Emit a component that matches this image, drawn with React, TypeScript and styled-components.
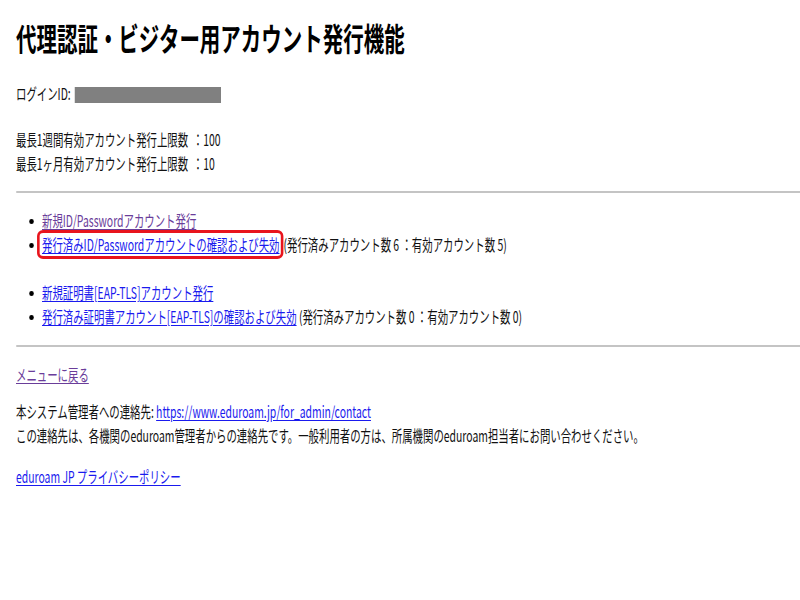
import React from 'react';
import styled, { createGlobalStyle } from 'styled-components';

// the screenshot is squeezed sideways, so the page is drawn wide and scaled back
const SQUEEZE = 0.65;

const GlobalStyle = createGlobalStyle`
  html, body {
    margin: 0;
    padding: 0;
    background: #fff;
    overflow: hidden;
  }
  body {
    font-family: "Noto Sans CJK JP", "DejaVu Sans", sans-serif;
    font-size: 16px;
    color: #111;
  }
`;

const Page = styled.div`
  width: calc(800px / ${SQUEEZE});
  transform: scaleX(${SQUEEZE});
  transform-origin: 0 0;
  padding: 17px 0 0 ${16 / SQUEEZE}px;
  box-sizing: border-box;
  line-height: 24px;
`;

const Title = styled.h1`
  margin: 0;
  font-size: 31.5px;
  line-height: 40px;
  font-weight: bold;
  color: #000;
`;

const Para = styled.p<{ $top?: number }>`
  margin: ${({ $top }) => $top ?? 16}px 0 0;
`;

const Masked = styled.span`
  display: inline-block;
  width: ${146 / SQUEEZE}px;
  height: 16px;
  margin-left: ${4 / SQUEEZE}px;
  vertical-align: -3px;
  background: #808080;
`;

const Rule = styled.hr<{ $top: number }>`
  margin: ${({ $top }) => $top}px 0 0;
  border: none;
  border-top: 2px solid #c4c4c4;
  height: 0;
`;

const List = styled.ul<{ $top: number }>`
  margin: ${({ $top }) => $top}px 0 0;
  padding-left: 40px;
  list-style: none;
`;

const Item = styled.li`
  position: relative;
  line-height: 23.5px;

  &::before {
    content: '';
    position: absolute;
    left: ${-13 / SQUEEZE}px;
    top: 10px;
    width: ${5 / SQUEEZE}px;
    height: 5px;
    border-radius: 50%;
    background: #000;
  }
`;

const Link = styled.a<{ $visited?: boolean }>`
  color: ${({ $visited }) => ($visited ? '#6a3d9a' : '#1a1aee')};
  text-decoration: underline;
  text-underline-offset: 2px;
  cursor: pointer;
`;

const Marked = styled.span`
  position: relative;
  margin-right: ${4 / SQUEEZE}px;

  &::after {
    content: '';
    position: absolute;
    left: ${-5 / SQUEEZE}px;
    right: ${-4 / SQUEEZE}px;
    top: -2px;
    bottom: -3px;
    border: 3px solid #e8141c;
    border-left-width: ${3 / SQUEEZE}px;
    border-right-width: ${3 / SQUEEZE}px;
    border-radius: ${6 / SQUEEZE}px / 6px;
    pointer-events: none;
  }
`;

const Note = styled.span`
  color: #111;
`;

export default function App(): JSX.Element {
  return (
    <>
      <GlobalStyle />
      <Page>
        <Title>代理認証・ビジター用アカウント発行機能</Title>

        <Para $top={24}>
          ログインID:
          <Masked />
        </Para>

        <Para $top={22}>
          最長1週間有効アカウント発行上限数 &nbsp;：100
          <br />
          最長1ヶ月有効アカウント発行上限数 &nbsp;：10
        </Para>

        <Rule $top={16} />

        <List $top={16}>
          <Item>
            <Link $visited>新規ID/Passwordアカウント発行</Link>
          </Item>
          <Item>
            <Marked>
              <Link>発行済みID/Passwordアカウントの確認および失効</Link>
            </Marked>
            <Note>(発行済みアカウント数 6 ：有効アカウント数 5)</Note>
          </Item>
        </List>

        <List $top={25}>
          <Item>
            <Link>新規証明書[EAP-TLS]アカウント発行</Link>
          </Item>
          <Item>
            <Link>発行済み証明書アカウント[EAP-TLS]の確認および失効</Link>{' '}
            <Note>(発行済みアカウント数 0 ：有効アカウント数 0)</Note>
          </Item>
        </List>

        <Rule $top={17} />

        <Para $top={15}>
          <Link $visited>メニューに戻る</Link>
        </Para>

        <Para $top={13}>
          本システム管理者への連絡先: <Link>https://www.eduroam.jp/for_admin/contact</Link>
          <br />
          この連絡先は、各機関のeduroam管理者からの連絡先です。一般利用者の方は、所属機関のeduroam担当者にお問い合わせください。
        </Para>

        <Para $top={17}>
          <Link>eduroam JP プライバシーポリシー</Link>
        </Para>
      </Page>
    </>
  );
}
